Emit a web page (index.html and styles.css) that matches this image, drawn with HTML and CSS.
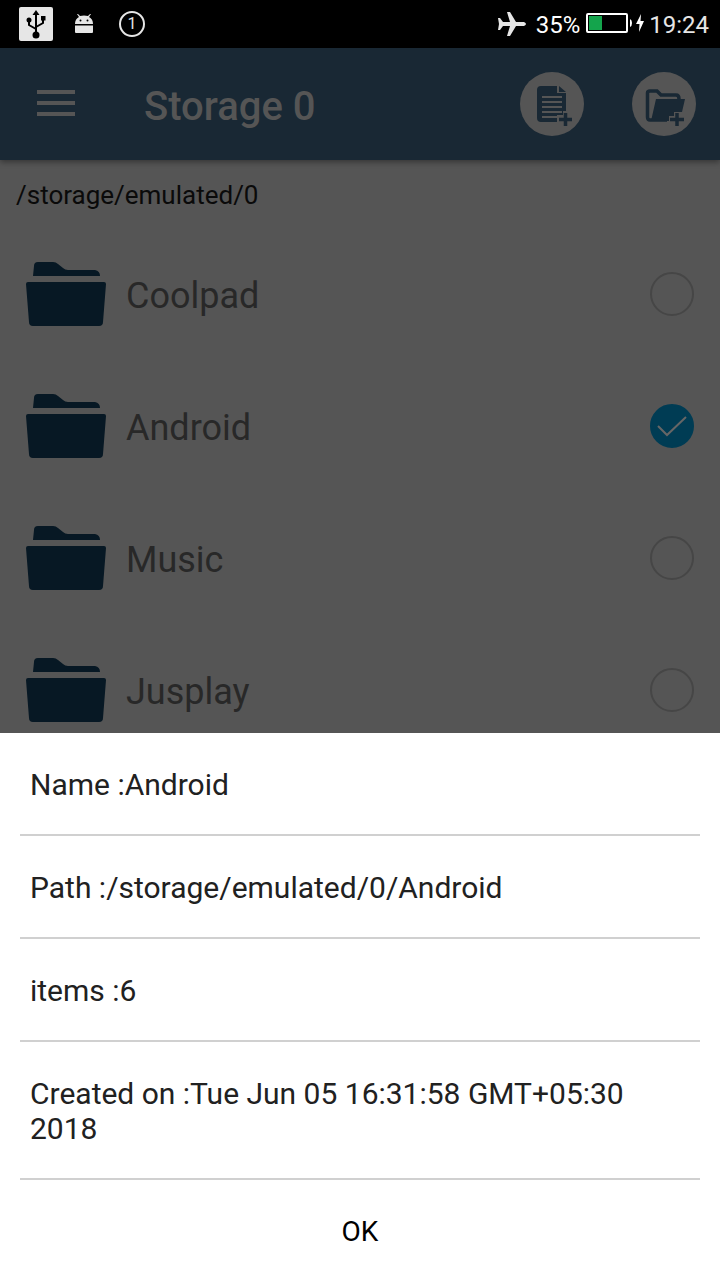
FILE: index.html
```html
<!DOCTYPE html>
<html lang="en">
<head>
<meta charset="utf-8">
<meta name="viewport" content="width=device-width, initial-scale=1">
<title>Storage 0</title>
<link rel="stylesheet" href="styles.css">
</head>
<body>
<svg class="defs" aria-hidden="true">
  <symbol id="folder" viewBox="0 0 80 64">
    <path d="M7 14 8 4Q8 0 12 0H27Q30 0 32 2L37 6Q39 8 42 8H69Q74 9 74 14Z"/>
    <path d="M2 20H78Q80 20 80 22L77 60Q77 64 73 64H7Q3 64 3 60L0 22Q0 20 2 20Z"/>
  </symbol>
</svg>
<div class="screen">
  <div class="status">
    <div class="status-left">
      <svg width="34" height="34" viewBox="0 0 34 34" aria-label="USB">
        <rect width="34" height="34" rx="2" fill="#e6e6e6"/>
        <path d="M17 28V6M17 22 10 18V13M17 20 24 16V11" fill="none" stroke="#000" stroke-width="2"/>
        <path d="M17 3 20.500 8H13.500Z"/><circle cx="17" cy="28" r="3.500"/><circle cx="10" cy="13" r="2.500"/><path d="M22 9H26.500V13.500H22Z"/>
      </svg>
      <svg width="18" height="20" viewBox="0 0 18 20" aria-label="Android">
        <path d="M0 10Q0 5 4 3L2 0 3 0 5 2Q9 1 13 2L15 0 16 0 14 3Q18 5 18 10ZM0 11.500H18V18Q18 19 17 19H1Q0 19 0 18Z" fill="#e6e6e6"/>
        <circle cx="5.500" cy="6.500" r="1"/><circle cx="12.500" cy="6.500" r="1"/>
      </svg>
      <span class="count">1</span>
    </div>
    <div class="status-right">
      <svg class="plane" width="28" height="24" viewBox="0 0 28 24" aria-label="Airplane mode">
        <path d="M0 6H2L5 10H12L9 0H12L18 10H26Q28 11 28 12Q28 13 26 14H18L12 24H9L12 14H5L2 18H0L1 12Z" fill="#e6e6e6"/>
      </svg>
      <span class="battery-text">35%</span>
      <svg width="59" height="22" viewBox="0 0 59 22" aria-label="Battery charging">
        <rect x="1" y="1" width="40" height="18" rx="1" fill="none" stroke="#fff" stroke-width="2"/>
        <path d="M3 3H16V17H3Z" fill="#14a44c"/><path d="M44 6Q46 7 46 10Q46 13 44 14Z" fill="#fff"/>
        <path d="M55 1 50 11H53.500L53 19 58 8H54.500Z" fill="#fff"/>
      </svg>
      <time class="clock">19:24</time>
    </div>
  </div>

  <header class="bar">
    <button class="menu" aria-label="Menu"><svg width="38" height="28" viewBox="0 0 38 28"><path d="M0 2H38M0 13H38M0 24H38" stroke="#555" stroke-width="4"/></svg></button>
    <h1 class="title">Storage 0</h1>
    <button class="round" aria-label="New file">
      <svg width="64" height="64" viewBox="0 0 64 64">
        <path d="M21 14H37V21H46V39H43V43H37V50H21Q17 50 17 46V18Q17 14 21 14ZM39 14 46 20H39Z" fill="#192834"/>
        <path d="M22 25H42M22 30H42M22 35H42M22 40H42M22 45H37" stroke="#555" stroke-width="2"/>
        <path d="M45.500 41V54M39 47.500H52" stroke="#192834" stroke-width="3.500"/>
      </svg>
    </button>
    <button class="round" aria-label="New folder">
      <svg width="64" height="64" viewBox="0 0 64 64">
        <path d="M35 48H18Q15.500 48 15.500 45V21Q15.500 19 18 19H25L29 23H44Q47 23 47 27" fill="none" stroke="#192834" stroke-width="3.500"/>
        <path d="M24 27H53L50 40H42V44H37V49H19Z" fill="#192834"/>
        <path d="M45 41V54M38 47.500H52" stroke="#192834" stroke-width="3.500"/>
      </svg>
    </button>
  </header>

  <main class="content">
    <p class="path">/storage/emulated/0</p>
    <ul class="files">
      <li><label class="file"><svg class="folder"><use href="#folder"/></svg><span class="file-name">Coolpad</span><span class="pick"><input type="checkbox"></span></label></li>
      <li><label class="file"><svg class="folder"><use href="#folder"/></svg><span class="file-name">Android</span><span class="pick"><input type="checkbox" checked><svg width="44" height="44" viewBox="0 0 44 44"><path d="M8 22 17 31 36 13" fill="none" stroke="#666" stroke-width="2"/></svg></span></label></li>
      <li><label class="file"><svg class="folder"><use href="#folder"/></svg><span class="file-name">Music</span><span class="pick"><input type="checkbox"></span></label></li>
      <li><label class="file"><svg class="folder"><use href="#folder"/></svg><span class="file-name">Jusplay</span><span class="pick"><input type="checkbox"></span></label></li>
    </ul>
  </main>

  <section class="sheet" role="dialog" aria-label="Details">
    <p class="detail">Name :Android</p>
    <p class="detail">Path :/storage/emulated/0/Android</p>
    <p class="detail">items :6</p>
    <p class="detail">Created on :Tue Jun 05 16:31:58 GMT+05:30 2018</p>
    <button class="ok">OK</button>
  </section>
</div>
</body>
</html>
```

FILE: styles.css
```css
* { box-sizing: border-box; }
body { margin: 0; background: #555; font-family: Roboto, "Liberation Sans", sans-serif; }
p, h1, ul { margin: 0; padding: 0; }
svg { display: block; flex: none; }
button { border: 0; padding: 0; background: none; font: inherit; cursor: pointer; }
.defs { position: absolute; width: 0; height: 0; }

.screen { position: relative; display: flex; flex-direction: column; min-height: 100vh; }

.status { display: flex; align-items: center; justify-content: space-between; height: 48px; padding: 0 11px 0 19px; background: #000; color: #e6e6e6; font-size: 24px; line-height: 28px; }
.status-left, .status-right { display: flex; align-items: center; }
.status-left { gap: 22px; }
.status-left .count { margin-left: 4px; }
.count { width: 26px; height: 26px; border: 2px solid #e6e6e6; border-radius: 50%; font-size: 16px; line-height: 22px; text-align: center; }
.plane { margin-right: 10px; }
.battery-text, .clock { padding-top: 2px; }
.battery-text { margin-right: 6px; color: #fff; }
.clock { margin-left: 4px; }

.bar { position: relative; display: flex; align-items: center; height: 112px; padding: 0 24px 0 37px; background: #192834; color: #555; box-shadow: 0 2px 6px rgba(0, 0, 0, 0.4); }
.title { flex: 1; margin-left: 69px; padding-top: 6px; font-size: 40px; line-height: 48px; font-weight: 500; }
.round { border-radius: 50%; background: #555; }
.round + .round { margin-left: 48px; }

.path { padding: 20px 16px 18px; color: #0a0a0a; font-size: 26px; line-height: 30px; }
.files { list-style: none; }
.file { display: flex; align-items: center; height: 132px; padding: 0 26px; }
.folder { width: 80px; height: 64px; fill: #071824; }
.file-name { flex: 1; margin-left: 20px; padding-top: 4px; color: #282828; font-size: 36px; line-height: 42px; }
.pick { display: grid; }
.pick > * { grid-area: 1 / 1; }
.pick input { appearance: none; width: 44px; height: 44px; margin: 0; border: 2px solid #464646; border-radius: 50%; }
.pick input:checked { border-color: #003c54; background: #003c54; }
.pick svg { z-index: 1; pointer-events: none; }

.sheet { position: absolute; right: 0; bottom: 0; left: 0; padding: 0 20px; background: #fff; color: #212121; font-size: 30px; line-height: 35px; }
.detail { padding: 34px 10px 32px; border-bottom: 2px solid #d0d0d0; }
.ok { width: 100%; height: 100px; padding-top: 2px; color: #000; font-size: 28px; }
```
